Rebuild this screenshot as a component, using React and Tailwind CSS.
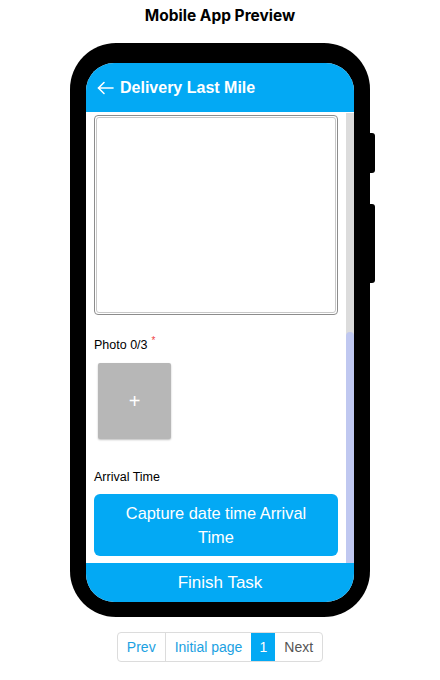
import React from 'react';

const font = { fontFamily: '"Liberation Sans", Arial, sans-serif' };
const titleFont = { fontFamily: 'Inter, "Liberation Sans", Arial, sans-serif' };

function BackArrow() {
  return (
    <svg width="17" height="14" viewBox="0 0 17 14" fill="none" stroke="white" strokeWidth="1.6" strokeLinecap="round" strokeLinejoin="round">
      <path d="M16 7H1.5" />
      <path d="M7 1.5L1.5 7L7 12.5" />
    </svg>
  );
}

function Pagination() {
  return (
    <div className="flex h-[30px] text-[14px] border border-[#dcdcdc] rounded-[4px] overflow-hidden">
      <div className="px-[9px] flex items-center text-[#1ba1e2] border-r border-[#dcdcdc]">Prev</div>
      <div className="px-[9px] flex items-center text-[#1ba1e2]">Initial page</div>
      <div className="w-[24px] flex items-center justify-center bg-[#03a9f4] text-white">1</div>
      <div className="px-[9px] flex items-center text-[#555]">Next</div>
    </div>
  );
}

export default function App() {
  return (
    <div className="w-[440px] h-[680px] bg-white flex flex-col items-center" style={font}>
      <div className="mt-[6px] h-[20px] text-[15.5px] font-bold text-black leading-[20px]" style={titleFont}>
        Mobile App Preview
      </div>

      {/* Phone frame */}
      <div className="relative mt-[17px] w-[300px] h-[574px] bg-black rounded-[46px] pt-[20px] px-[16px] pb-[15px]">
        <div className="absolute right-[-5px] top-[90px] w-[6px] h-[40px] bg-black rounded-r-[3px]" />
        <div className="absolute right-[-5px] top-[161px] w-[6px] h-[79px] bg-black rounded-r-[3px]" />

        <div className="h-full bg-white rounded-[28px] overflow-hidden flex flex-col">
          {/* Header */}
          <div className="h-[49px] shrink-0 bg-[#03a9f4] flex items-center pl-[11px] gap-[6px]">
            <BackArrow />
            <span className="text-white text-[16px] font-bold">Delivery Last Mile</span>
          </div>

          {/* Scrollable content */}
          <div className="flex-1 flex min-h-0">
            <div className="flex-1 pl-[8px] pr-[8px] pt-[3px] flex flex-col">
              <div className="h-[200px] rounded-[4px] border border-[#8c8c8c] p-[1px]">
                <div className="h-full rounded-[3px] border border-[#c8c8c8]" />
              </div>

              <div className="mt-[22px] h-[16px] text-[12.5px] leading-[16px] text-black">
                Photo 0/3<sup className="text-[#f04444] ml-[4px] text-[10px]">*</sup>
              </div>

              <div className="mt-[10px] ml-[4px] w-[73px] h-[76px] bg-[#b7b7b7] rounded-[2px] shadow-[0_1px_2px_rgba(0,0,0,0.25)] flex items-center justify-center">
                <span className="text-white text-[20px] font-light leading-none">+</span>
              </div>

              <div className="mt-[30px] h-[16px] text-[12.5px] leading-[16px] text-black">Arrival Time</div>

              <div className="mt-[9px] h-[62px] bg-[#03a9f4] rounded-[6px] flex items-center justify-center px-[20px] text-center">
                <span className="text-white text-[16.4px] leading-[24px]">Capture date time Arrival Time</span>
              </div>
            </div>

            {/* Scrollbar */}
            <div className="w-[8px] shrink-0 bg-[#dcdcdc] flex flex-col justify-end mt-[1px]">
              <div className="h-[231px] bg-[#c0c8f0] rounded-t-[4px]" />
            </div>
          </div>

          {/* Finish task */}
          <div className="h-[39px] shrink-0 bg-[#03a9f4] flex items-center justify-center">
            <span className="text-white text-[17px]">Finish Task</span>
          </div>
        </div>
      </div>

      <div className="mt-[15px]">
        <Pagination />
      </div>
    </div>
  );
}
